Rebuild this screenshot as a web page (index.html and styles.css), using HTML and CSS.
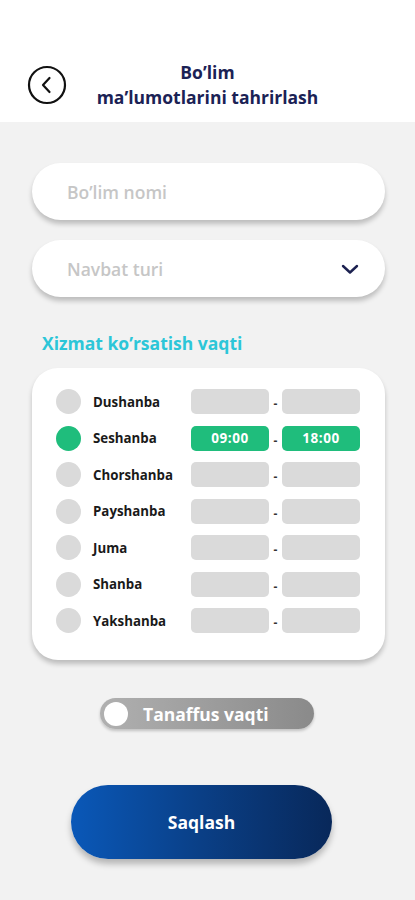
FILE: index.html
```html
<!DOCTYPE html>
<html lang="uz">
<head>
<meta charset="utf-8">
<title>Bo'lim ma'lumotlarini tahrirlash</title>
<link rel="stylesheet" href="styles.css">
</head>
<body>
<div class="app">
  <header class="header">
    <button class="back" aria-label="Orqaga">
      <svg width="40" height="40" viewBox="0 0 40 40"><circle cx="20" cy="20" r="18" fill="none" stroke="#111" stroke-width="2.2"/><path d="M22.5 13 L16 20 L22.5 27" fill="none" stroke="#111" stroke-width="2.2" stroke-linecap="round" stroke-linejoin="round"/></svg>
    </button>
    <h1 class="title">Bo’lim<br>ma’lumotlarini tahrirlash</h1>
    <span class="spacer"></span>
  </header>
  <main class="content">
    <div class="field"><span class="placeholder">Bo’lim nomi</span></div>
    <div class="field select"><span class="placeholder">Navbat turi</span>
      <svg class="chev" width="18" height="12" viewBox="0 0 18 12"><path d="M2 3 L9 9.5 L16 3" fill="none" stroke="#1c2150" stroke-width="2.4" stroke-linecap="round" stroke-linejoin="round"/></svg>
    </div>
    <h2 class="section">Xizmat ko’rsatish vaqti</h2>
    <div class="card">
      <div class="row"><span class="dot"></span><span class="day">Dushanba</span><span class="time"></span><span class="sep">-</span><span class="time"></span></div>
      <div class="row"><span class="dot on"></span><span class="day">Seshanba</span><span class="time on">09:00</span><span class="sep">-</span><span class="time on">18:00</span></div>
      <div class="row"><span class="dot"></span><span class="day">Chorshanba</span><span class="time"></span><span class="sep">-</span><span class="time"></span></div>
      <div class="row"><span class="dot"></span><span class="day">Payshanba</span><span class="time"></span><span class="sep">-</span><span class="time"></span></div>
      <div class="row"><span class="dot"></span><span class="day">Juma</span><span class="time"></span><span class="sep">-</span><span class="time"></span></div>
      <div class="row"><span class="dot"></span><span class="day">Shanba</span><span class="time"></span><span class="sep">-</span><span class="time"></span></div>
      <div class="row"><span class="dot"></span><span class="day">Yakshanba</span><span class="time"></span><span class="sep">-</span><span class="time"></span></div>
    </div>
    <div class="toggle"><span class="knob"></span><span class="toggle-label">Tanaffus vaqti</span></div>
    <button class="save">Saqlash</button>
  </main>
</div>
</body>
</html>
```
FILE: styles.css
```css
* { box-sizing: border-box; }
html, body { margin: 0; padding: 0; }
body {
  background: #f2f2f2;
  font-family: "Open Sans", "Noto Sans", sans-serif;
  width: 415px;
  min-height: 900px;
}
.header {
  background: #fff;
  height: 122px;
  display: grid;
  grid-template-columns: 40px 1fr 40px;
  align-items: center;
  padding: 48px 27px 0 27px;
}
.back {
  width: 40px;
  height: 40px;
  padding: 0;
  border: 0;
  background: none;
  display: block;
}
.back svg { display: block; }
.title {
  margin: 0;
  text-align: center;
  font-size: 17.5px;
  font-weight: 700;
  line-height: 25px;
  color: #1b2255;
}
.content {
  padding: 41px 30px 0 32px;
  display: flex;
  flex-direction: column;
}
.field {
  height: 57px;
  background: #fff;
  border-radius: 29px;
  box-shadow: 0 4px 5px rgba(0,0,0,0.22);
  display: flex;
  align-items: center;
  padding: 0 26px 0 35px;
  margin-bottom: 20px;
}
.placeholder {
  font-size: 17.5px;
  font-weight: 600;
  color: #c6c6c6;
  flex: 1;
}
.chev { display: block; }
.section {
  margin: 14px 0 0 10px;
  font-size: 17.5px;
  font-weight: 700;
  color: #2cc6d8;
  line-height: 24px;
}
.card {
  margin-top: 13px;
  background: #fff;
  border-radius: 26px;
  box-shadow: 0 4px 5px rgba(0,0,0,0.22);
  padding: 21px 24px 27px 24px;
  display: flex;
  flex-direction: column;
  gap: 11.5px;
}
.row {
  display: flex;
  align-items: center;
  height: 25px;
}
.dot {
  width: 25px;
  height: 25px;
  border-radius: 50%;
  background: #dadada;
  flex: none;
}
.dot.on { background: #1fbd7c; }
.day {
  margin-left: 12px;
  width: 98px;
  font-size: 13.3px;
  font-weight: 700;
  color: #1a1a1a;
}
.time {
  width: 78px;
  height: 25px;
  border-radius: 5px;
  background: #dadada;
  display: flex;
  align-items: center;
  justify-content: center;
  font-size: 13.5px;
  font-weight: 700;
  color: #fff;
  letter-spacing: 0.6px;
}
.time.on { background: #1fbd7c; }
.sep {
  width: 13px;
  text-align: center;
  font-size: 12px;
  font-weight: 700;
  color: #333;
  padding-top: 4px;
}
.toggle {
  align-self: flex-start;
  margin: 38px 0 0 68px;
  width: 214px;
  height: 31px;
  border-radius: 16px;
  background: linear-gradient(90deg, #b0b0b0, #8a8a8a);
  box-shadow: 0 2px 3px rgba(0,0,0,0.2);
  display: flex;
  align-items: center;
  padding-left: 4px;
}
.knob {
  width: 24px;
  height: 24px;
  border-radius: 50%;
  background: #fff;
  flex: none;
}
.toggle-label {
  margin-left: 15px;
  font-size: 17.5px;
  font-weight: 700;
  color: #fff;
}
.save {
  align-self: flex-start;
  margin: 56px 0 0 39px;
  width: 261px;
  height: 74px;
  border: 0;
  border-radius: 37px;
  background: linear-gradient(90deg, #0a58b8 0%, #0a3f86 50%, #08285a 100%);
  box-shadow: 0 5px 6px rgba(0,0,0,0.25);
  font-family: "Open Sans", "Noto Sans", sans-serif;
  font-size: 17.5px;
  font-weight: 700;
  color: #fff;
}
```
